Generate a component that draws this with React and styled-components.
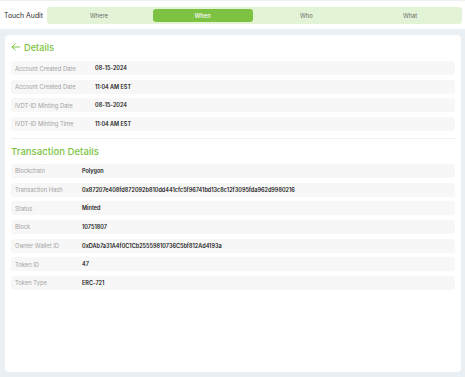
import styled, { createGlobalStyle } from "styled-components";

const GlobalStyle = createGlobalStyle`
  html, body {
    margin: 0;
    padding: 0;
    background: #eaeff3;
    font-family: "Inter", "Liberation Sans", sans-serif;
  }
`;

const tabs = ["Where", "When", "Who", "What"];

const details = [
  { label: "Account Created Date", value: "08-15-2024" },
  { label: "Account Created Date", value: "11:04 AM EST" },
  { label: "IVDT-ID Minting Date", value: "08-15-2024" },
  { label: "IVDT-ID Minting Time", value: "11:04 AM EST" },
];

const transaction = [
  { label: "Blockchain", value: "Polygon" },
  { label: "Transaction Hash", value: "0x87207e408fd872092b810dd441cfc5f96741bd13c8c12f3095fda962d9980216" },
  { label: "Status", value: "Minted" },
  { label: "Block", value: "10751807" },
  { label: "Owner Wallet ID", value: "0xDAb7a31A4f0C1Cb25559810736C5bf812Ad4193a" },
  { label: "Token ID", value: "47" },
  { label: "Token Type", value: "ERC-721" },
];

const App = () => {
  return (
    <>
      <GlobalStyle />
      <Page>
        <TopBar>
          <Title>Touch Audit</Title>
          <TabBar>
            {tabs.map((tab) => (
              <Tab key={tab} active={tab === "When"}>
                {tab}
              </Tab>
            ))}
          </TabBar>
        </TopBar>

        <Card>
          <Heading>
            <svg width="9" height="8" viewBox="0 0 9 8" fill="none">
              <path d="M8.5 4H1M4.2 0.8L1 4l3.2 3.2" stroke="#7dc443" strokeWidth="1" strokeLinecap="round" strokeLinejoin="round" />
            </svg>
            Details
          </Heading>
          <List>
            {details.map((row, index) => (
              <Row key={index} labelWidth={80}>
                <Label>{row.label}</Label>
                <Value>{row.value}</Value>
              </Row>
            ))}
          </List>

          <Divider />

          <SectionTitle>Transaction Details</SectionTitle>
          <List>
            {transaction.map((row, index) => (
              <Row key={index} labelWidth={67}>
                <Label>{row.label}</Label>
                <Value>{row.value}</Value>
              </Row>
            ))}
          </List>
        </Card>
      </Page>
    </>
  );
};

export default App;

const Page = styled.div`
  width: 465px;
  height: 377px;
  display: flex;
  flex-direction: column;
  overflow: hidden;
`;

const TopBar = styled.div`
  height: 29px;
  box-sizing: border-box;
  background: #ffffff;
  border-top: 1px solid #eef0f2;
  display: flex;
  align-items: center;
  padding: 0 3px 0 4px;
  gap: 4px;
`;

const Title = styled.div`
  font-size: 6.9px;
  color: #2b2b2b;
  white-space: nowrap;
`;

const TabBar = styled.div`
  flex: 1;
  height: 17px;
  box-sizing: border-box;
  background: #e3f4d6;
  border-radius: 3px;
  display: grid;
  grid-template-columns: repeat(4, 1fr);
  padding: 2px;
  gap: 4px;
`;

const Tab = styled.div`
  display: flex;
  align-items: center;
  justify-content: center;
  border-radius: 3px;
  font-size: 5.8px;
  font-weight: ${({ active }) => (active ? 500 : 400)};
  color: ${({ active }) => (active ? "#ffffff" : "#6a6a6a")};
  background: ${({ active }) => (active ? "#7dc242" : "transparent")};
`;

const Card = styled.div`
  flex: 1;
  margin: 6px 4px 5px 5px;
  background: #ffffff;
  border-radius: 4px;
  padding: 6px 6px 0 6px;
`;

const Heading = styled.div`
  display: flex;
  align-items: center;
  gap: 4px;
  height: 12px;
  font-size: 9.2px;
  font-weight: 500;
  color: #7dc443;
  margin-bottom: 8px;
`;

const SectionTitle = styled.div`
  height: 14px;
  display: flex;
  align-items: center;
  font-size: 9.6px;
  font-weight: 500;
  color: #7dc443;
  margin: 6px 0 5px 0;
`;

const List = styled.div`
  display: flex;
  flex-direction: column;
  gap: 4.67px;
`;

const Row = styled.div`
  height: 14px;
  background: #f7f7f7;
  border-radius: 3px;
  display: grid;
  grid-template-columns: ${({ labelWidth }) => `${labelWidth}px 1fr`};
  align-items: center;
  padding-left: 4px;
`;

const Label = styled.div`
  font-size: 5.8px;
  color: #a3a3a3;
  white-space: nowrap;
`;

const Value = styled.div`
  font-size: 5.5px;
  font-weight: 600;
  color: #222222;
  white-space: nowrap;
`;

const Divider = styled.div`
  height: 1px;
  background: #f0f0f0;
  margin-top: 7px;
`;
